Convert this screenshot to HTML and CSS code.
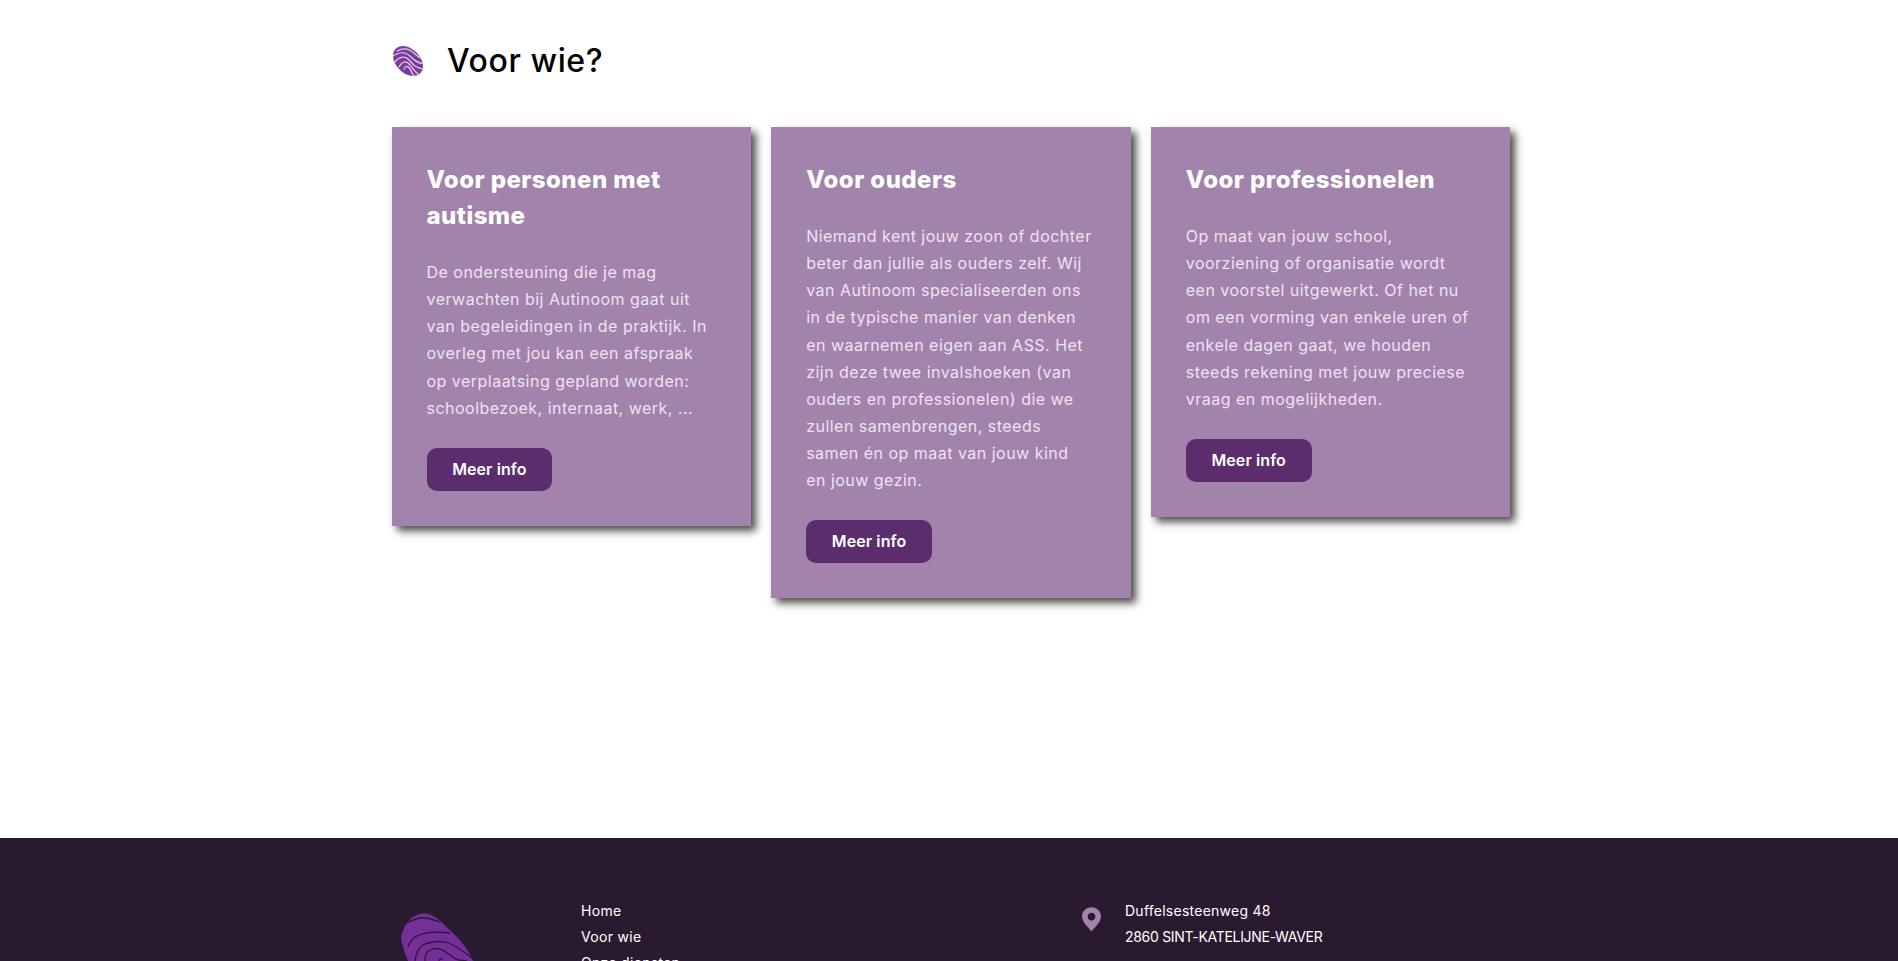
FILE: index.html
```html
<!DOCTYPE html>
<html lang="nl">
<head>
<meta charset="utf-8">
<title>Voor wie?</title>
<link rel="stylesheet" href="styles.css">
</head>
<body>
<main class="main">
  <div class="wrap">
    <header class="head">
      <svg class="print-small" viewBox="0 0 32 32" aria-hidden="true">
        <defs><clipPath id="c1"><ellipse cx="16" cy="16" rx="12" ry="17.500" transform="rotate(-45 16 16)"/></clipPath></defs>
        <ellipse cx="16" cy="16" rx="12" ry="17.500" transform="rotate(-45 16 16)" fill="#7b3a9c"/>
        <g clip-path="url(#c1)" fill="none" stroke="#dcc8e6" stroke-width="1.400" stroke-linecap="round">
          <path d="M0 12C7 6 14 7 19 12S27 18 33 19"/>
          <path d="M2 18C8 10 14 11 18 16S25 23 32 24"/>
          <path d="M7 22C11 15 15 16 18 20S23 27 28 31"/>
          <path d="M12 24C14 20 16 21 18 24S20 29 22 31"/>
          <path d="M5 6C12 2 18 4 23 9S29 13 33 14"/>
        </g>
      </svg>
      <h1 class="page-title">Voor wie?</h1>
    </header>
    <section class="cards">
      <article class="card">
        <h2 class="card-title">Voor personen met<br>autisme</h2>
        <p class="card-text">De ondersteuning die je mag<br>verwachten bij Autinoom gaat uit<br>van begeleidingen in de praktijk. In<br>overleg met jou kan een afspraak<br>op verplaatsing gepland worden:<br>schoolbezoek, internaat, werk, ...</p>
        <a class="btn" href="#">Meer info</a>
      </article>
      <article class="card">
        <h2 class="card-title">Voor ouders</h2>
        <p class="card-text">Niemand kent jouw zoon of dochter<br>beter dan jullie als ouders zelf. Wij<br>van Autinoom specialiseerden ons<br>in de typische manier van denken<br>en waarnemen eigen aan ASS. Het<br>zijn deze twee invalshoeken (van<br>ouders en professionelen) die we<br>zullen samenbrengen, steeds<br>samen én op maat van jouw kind<br>en jouw gezin.</p>
        <a class="btn" href="#">Meer info</a>
      </article>
      <article class="card">
        <h2 class="card-title">Voor professionelen</h2>
        <p class="card-text">Op maat van jouw school,<br>voorziening of organisatie wordt<br>een voorstel uitgewerkt. Of het nu<br>om een vorming van enkele uren of<br>enkele dagen gaat, we houden<br>steeds rekening met jouw preciese<br>vraag en mogelijkheden.</p>
        <a class="btn" href="#">Meer info</a>
      </article>
    </section>
  </div>
</main>
<footer class="footer">
  <div class="footer-inner">
    <div class="logo-col">
      <svg class="print-large" viewBox="0 0 85 85" aria-hidden="true">
        <path fill="#742f99" d="M2 28C3 20 8 10 14 7C20 3 26 2 32 5C40 8 47 17 53 22C60 29 68 37 74 51L85 85L30 85C18 70 6 50 2 28Z"/>
        <g fill="none" stroke="#2a1a30" stroke-width="1.300">
          <path d="M8 13C13 10 18 8 24 8S36 10 41 12"/>
          <path d="M9 37C11 31 15 27 20 25S36 21 51 23"/>
          <path d="M16 51C17 44 19 38 24 35S40 30 49 33S65 42 73 48"/>
          <path d="M26 51C26 46 27 42 31 40S42 37 51 45S62 49 68 51"/>
          <path d="M40 51C40 49 42 47 44 50"/>
        </g>
      </svg>
    </div>
    <ul class="nav-col">
      <li><a href="#">Home</a></li>
      <li><a href="#">Voor wie</a></li>
      <li><a href="#">Onze diensten</a></li>
    </ul>
    <div class="address-col">
      <svg class="pin" viewBox="0 0 20 26" aria-hidden="true">
        <path fill-rule="evenodd" d="M10 0C4.5 0 0 4.4 0 9.8C0 15.5 6.500 21 10 25.500C13.500 21 20 15.500 20 9.800C20 4.400 15.500 0 10 0ZM10 6C12.200 6 14 7.800 14 10S12.200 14 10 14S6 12.200 6 10S7.800 6 10 6Z"/>
      </svg>
      <address class="address"><span class="street">Duffelsesteenweg 48</span><br><span class="city">2860 SINT-KATELIJNE-WAVER</span></address>
    </div>
  </div>
</footer>
</body>
</html>
```
FILE: styles.css
```css
* { box-sizing: border-box; }
html, body { margin: 0; height: 961px; overflow: hidden; }
body { background: #fff; font-family: Inter, "Open Sans", "Liberation Sans", sans-serif; color: #000; }
.main { height: 838px; }
.wrap { width: 1120px; margin: 0 0 0 392px; }
.head { display: flex; align-items: center; height: 127px; padding-bottom: 6px; gap: 23px; }
.print-small { width: 32px; height: 32px; flex: none; }
.page-title { margin: 0; font-size: 32px; font-weight: 500; letter-spacing: 0.6px; }
.cards { display: grid; grid-template-columns: repeat(3, 359.67px); gap: 20px; align-items: start; margin-left: -0.5px; }
.card { background: #a283ab; padding: 35px; box-shadow: 5px 5px 8px rgba(0,0,0,.7); }
.card-title { margin: 0 0 25px; font-size: 24px; line-height: 36px; font-weight: 800; color: #fff; letter-spacing: .45px; white-space: nowrap; }
.card-text { margin: 0 0 25.8px; font-size: 16px; line-height: 27.15px; color: #ece4f2; white-space: nowrap; letter-spacing: .48px; }
.btn { display: block; width: 125.8px; height: 43px; line-height: 43px; text-align: center; background: #5b2d6c; color: #fff; border-radius: 10px; font-size: 16px; font-weight: 600; letter-spacing: .1px; text-decoration: none; }
.footer { background: #2a1a30; height: 123px; color: #fff; overflow: hidden; }
.footer-inner { width: 1120px; margin-left: 392px; display: flex; padding-top: 60px; }
.logo-col { width: 189px; flex: none; padding: 12px 0 0 7px; }
.print-large { display: block; width: 85px; height: 85px; }
.nav-col { list-style: none; margin: 0; padding: 0; width: 501px; flex: none; font-size: 14px; line-height: 26px; letter-spacing: .3px; }
.nav-col a { color: #fff; text-decoration: none; }
.address-col { display: flex; gap: 24px; }
.pin { width: 19px; height: 25px; margin: 9px 0 0 0; fill: #a283ab; flex: none; }
.address { font-style: normal; font-size: 14px; line-height: 26px; white-space: nowrap; }
.street { letter-spacing: .25px; }
.city { letter-spacing: -.3px; }
```
